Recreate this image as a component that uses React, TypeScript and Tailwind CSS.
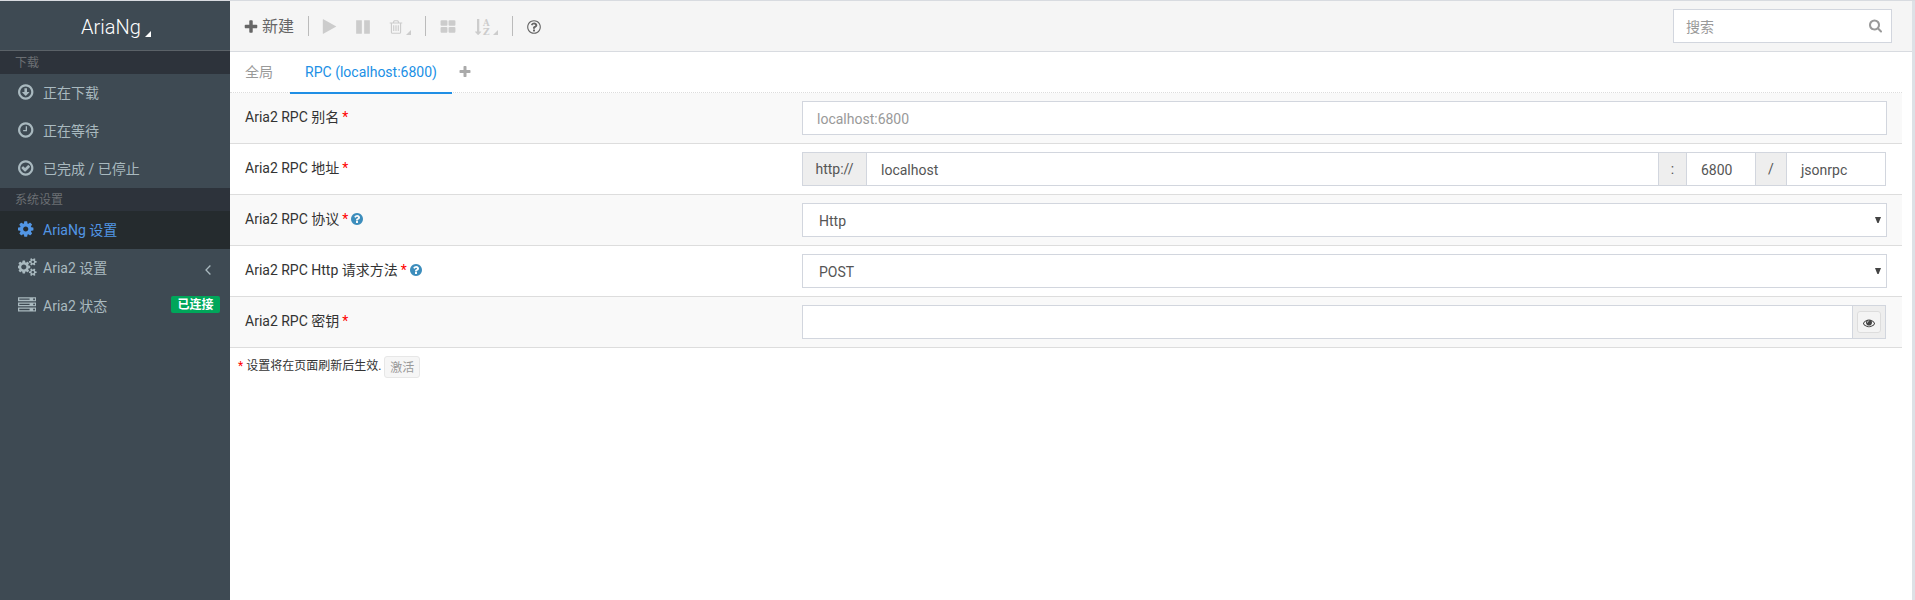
import React from "react";

const RING =
  "M1440 896q0-148-73-273t-198-198-273-73-273 73-198 198-73 273 73 273 198 198 273 73 273-73 198-198 73-273zm224 0q0 209-103 385.5t-279.5 279.5-385.5 103-385.5-103-279.5-279.5-103-385.5 103-385.5 279.5-279.5 385.5-103 385.5 103 279.5 279.5 103 385.5z";
const DISC = "M1664 896q0 209-103 385.5t-279.5 279.5-385.5 103-385.5-103-279.5-279.5-103-385.5 103-385.5 279.5-279.5 385.5-103 385.5 103 279.5 279.5 103 385.5z";
const SMALL_COG =
  "v140q0 16-149 31-12 27-30 52 51 113 51 138 0 4-4 7-122 71-124 71-8 0-46-47t-52-68q-20 2-30 2t-30-2q-14 21-52 68t-46 47q-2 0-124-71-4-3-4-7 0-25 51-138-18-25-30-52-149-15-149-31v-140q0-16 149-31 13-29 30-52-51-113-51-138 0-4 4-7 4-2 35-20t59-34 30-16q8 0 46 46.5t52 67.5q20-2 30-2t30 2q51-71 92-112l6-2q4 0 124 70 4 3 4 7 0 25-51 138 17 23 30 52 149 15 149 31z";
const SLOT = "v576q0 14-9 23t-23 9h-64q-14 0-23-9t-9-23v-576q0-14 9-23t23-9h64q14 0 23 9t9 23z";
const BAR = "v1408q0 26-19 45t-45 19h-512q-26 0-45-19t-19-45v-1408q0-26 19-45t45-19h512q26 0 45 19t19 45z";
const TILE = "v384q0 52-38 90t-90 38h-512q-52 0-90-38t-38-90v-384q0-52 38-90t90-38h512q52 0 90 38t38 90z";
const LED = "q0-40-28-68t-68-28-68 28-28 68 28 68 68 28 68-28 28-68z";

const PATHS = {
  down: RING + "M1248 928q0 14-10 24l-319 319q-10 9-23 9t-23-9l-320-320q-15-16-7-35 8-20 30-20h192v-352q0-14 9-23t23-9h192q14 0 23 9t9 23v352h192q14 0 23 9t9 23z",
  clock: RING + "M1024 544v448q0 14-9 23t-23 9h-320q-14 0-23-9t-9-23v-64q0-14 9-23t23-9h224v-352q0-14 9-23t23-9h64q14 0 23 9t9 23z",
  check: RING + "M1299 813l-422 422q-19 19-45 19t-45-19l-294-294q-19-19-19-45t19-45l102-102q19-19 45-19t45 19l147 147 275-275q19-19 45-19t45 19l102 102q19 19 19 45t-19 45z",
  cog: "M1152 896q0-106-75-181t-181-75-181 75-75 181 75 181 181 75 181-75 75-181zm512-109v222q0 12-8 23t-20 13l-185 28q-19 54-39 91 35 50 107 138 10 12 10 25t-9 23q-27 37-99 108t-94 71q-12 0-26-9l-138-108q-44 23-91 38-16 136-29 186-7 28-36 28h-222q-14 0-24.5-8.5t-11.5-21.5l-28-184q-49-16-90-37l-141 107q-10 9-25 9-14 0-25-11-126-114-165-168-7-10-7-23 0-12 8-23 15-21 51-66.5t54-70.5q-27-50-41-99l-183-27q-13-2-21-12.5t-8-23.5v-222q0-12 8-23t19-13l186-28q14-46 39-92-40-57-107-138-10-12-10-24 0-10 9-23 26-36 98.5-107.5t94.5-71.5q13 0 26 10l138 107q44-23 91-38 16-136 29-186 7-28 36-28h222q14 0 24.5 8.5t11.5 21.5l28 184q49 16 90 37l142-107q9-9 24-9 13 0 25 10 129 119 165 170 7 8 7 22 0 12-8 23-15 21-51 66.5t-54 70.5q26 50 41 98l183 28q13 2 21 12.5t8 23.5z",
  cogs:
    "M832 896q0-106-75-181t-181-75-181 75-75 181 75 181 181 75 181-75 75-181zm768 512q0-52-38-90t-90-38-90 38-38 90q0 53 37.5 90.5t90.5 37.5 90.5-37.5 37.5-90.5zm0-1024q0-52-38-90t-90-38-90 38-38 90q0 53 37.5 90.5t90.5 37.5 90.5-37.5 37.5-90.5zm-384 421v185q0 10-7 19.5t-16 10.5l-155 24q-11 35-32 76 34 48 90 115 7 11 7 20 0 12-7 19-23 30-82.5 89.5t-78.5 59.5q-11 0-21-7l-115-90q-37 19-77 31-11 108-23 155-7 24-30 24h-186q-11 0-20-7.5t-10-17.5l-23-153q-34-10-75-31l-118 89q-7 7-20 7-11 0-21-8-144-133-144-160 0-9 7-19 10-14 41-53t47-61q-23-44-35-82l-152-24q-10-1-17-9.5t-7-19.5v-185q0-10 7-19.5t16-10.5l155-24q11-35 32-76-34-48-90-115-7-11-7-20 0-12 7-20 22-30 82-89t79-59q11 0 21 7l115 90q34-18 77-32 11-108 23-154 7-24 30-24h186q11 0 20 7.5t10 17.5l23 153q34 10 75 31l118-89q8-7 20-7 11 0 21 8 144 133 144 160 0 8-7 19-12 16-42 54t-45 60q23 48 34 82l152 23q10 2 17 10.5t7 19.5zm640 533" +
    SMALL_COG + "M1856 314" + SMALL_COG,
  server:
    "M128 1408h1024v-128h-1024v128zm0-512h1024v-128h-1024v128zm0-512h1024v-128h-1024v128zM1696 1344" + LED + "M1696 832" + LED + "M1696 320" + LED +
    "M1792 1152v384h-1792v-384h1792zm0-512v384h-1792v-384h1792zm0-512v384h-1792v-384h1792z",
  plus: "M1600 736v192q0 40-28 68t-68 28h-416v416q0 40-28 68t-68 28h-192q-40 0-68-28t-28-68v-416h-416q-40 0-68-28t-28-68v-192q0-40 28-68t68-28h416v-416q0-40 28-68t68-28h192q40 0 68 28t28 68v416h416q40 0 68 28t28 68z",
  play: "M1576 927l-1328 738q-23 13-39.5 3t-16.5-36v-1472q0-26 16.5-36t39.5 3l1328 738q23 13 23 31t-23 31z",
  pause: "M1664 192" + BAR + "M768 192" + BAR,
  trash:
    "M704 736" + SLOT + "M960 736" + SLOT + "M1216 736" + SLOT +
    "M1344 1460v-948h-896v948q0 22 7 40.5t14.5 27 10.5 8.5h832q3 0 10.5-8.5t14.5-27 7-40.5zm-672-1076h448l-48-117q-7-9-17-11h-317q-10 2-17 11zm928 32v64q0 14-9 23t-23 9h-96v948q0 83-47 143.5t-113 60.5h-832q-66 0-113-58.5t-47-141.5v-952h-96q-14 0-23-9t-9-23v-64q0-14 9-23t23-9h309l70-167q15-37 54-63t79-26h320q40 0 79 26t54 63l70 167h309q14 0 23 9t9 23z",
  tiles: "M832 1024" + TILE + "M832 256" + TILE + "M1728 1024" + TILE + "M1728 256" + TILE,
  arrow: "M704 1440q0 12-10 24l-319 319q-10 9-23 9-12 0-23-9l-320-320q-15-16-7-35 8-20 30-20h192v-1376q0-14 9-23t23-9h192q14 0 23 9t9 23v1376h192q14 0 23 9t9 23z",
  help:
    "M1024 1376v-192q0-14-9-23t-23-9h-192q-14 0-23 9t-9 23v192q0 14 9 23t23 9h192q14 0 23-9t9-23zm256-672q0-88-55.5-163t-138.5-116-170-41q-243 0-371 213-15 24 8 42l132 100q7 6 19 6 16 0 25-12 53-68 86-92 34-24 86-24 48 0 85.5 26t37.5 59q0 38-20 61t-68 45q-63 28-115.5 86.5t-52.5 125.5v36q0 14 9 23t23 9h192q14 0 23-9t9-23q0-19 21.5-49.5t54.5-49.5q32-18 49-28.5t46-35 44.5-48 28-60.5 12.5-81z" + DISC,
  helpOutline:
    "M1008 1200v160q0 14-9 23t-23 9h-160q-14 0-23-9t-9-23v-160q0-14 9-23t23-9h160q14 0 23 9t9 23zm256-496q0 50-15 90t-45.5 69-52 44-59.5 36q-32 18-46.5 28t-26 24-11.5 29v32q0 14-9 23t-23 9h-160q-14 0-23-9t-9-23v-68q0-35 10.5-64.5t24-47.5 39-35.5 41-25.5 44.5-21q53-25 75-43t22-49q0-42-43.5-71.5t-95.5-29.5q-56 0-95 27-29 20-80 83-9 12-25 12-11 0-19-6l-108-82q-10-7-12-20t5-23q122-192 349-192 129 0 238.5 89.5t109.5 214.5zm-368-448q-130 0-248.5 51t-204 136.5-136.5 204-51 248.5 51 248.5 136.5 204 204 136.5 248.5 51 248.5-51 204-136.5 136.5-204 51-248.5-51-248.5-136.5-204-204-136.5-248.5-51z" + DISC,
  search:
    "M1216 832q0-185-131.5-316.5t-316.5-131.5-316.5 131.5-131.5 316.5 131.5 316.5 316.5 131.5 316.5-131.5 131.5-316.5zm512 832q0 52-38 90t-90 38q-54 0-90-38l-343-342q-179 124-399 124-143 0-273.5-55.5t-225-150-150-225-55.5-273.5 55.5-273.5 150-225 225-150 273.5-55.5 273.5 55.5 225 150 150 225 55.5 273.5q0 220-124 399l343 343q37 37 37 90z",
  eye: "M1664 960q-152-236-381-353 61 104 61 225 0 185-131.5 316.5t-316.5 131.5-316.5-131.5-131.5-316.5q0-121 61-225-229 117-381 353 133 205 333.5 326.5t434.5 121.5 434.5-121.5 333.5-326.5zm-720-384q0-20-14-34t-34-14q-125 0-214.5 89.5t-89.5 214.5q0 20 14 34t34 14 34-14 14-34q0-86 61-147t147-61q20 0 34-14t14-34zm848 384q0 34-20 69-140 230-376.5 368.5t-499.5 138.5-499.5-139-376.5-368q-20-35-20-69t20-69q140-229 376.5-368t499.5-139 499.5 139 376.5 368q20 35 20 69z",
};

function Icon({ name, className = "", box = "0 0 1792 1792" }: { name: keyof typeof PATHS; className?: string; box?: string }) {
  return (
    <svg viewBox={box} className={"block shrink-0 " + className} fill="currentColor" fillRule="evenodd">
      <path d={PATHS[name]} />
    </svg>
  );
}

function Corner({ className = "size-[5px]" }: { className?: string }) {
  return (
    <svg viewBox="0 0 5 5" className={"block shrink-0 " + className} fill="currentColor">
      <path d="M5 0V5H0z" />
    </svg>
  );
}

function MenuHeader({ children }: { children: React.ReactNode }) {
  return <div className="h-[23px] bg-[#2d333b] pt-px pl-[15px] text-xs leading-[23px] text-[#6b6f73]">{children}</div>;
}

function MenuItem({ icon, label, active, box, iconClass = "w-[18px]", children }: { icon: keyof typeof PATHS; label: string; active?: boolean; box?: string; iconClass?: string; children?: React.ReactNode }) {
  return (
    <div className={"flex h-[38px] items-center pr-[10px] text-sm " + (active ? "bg-[#252b2e] text-[#5296e5]" : "text-[#a9b9bf]")}>
      <span className="flex w-[43px] shrink-0 pb-[3px] pl-[18px]">
        <Icon name={icon} box={box} className={"h-[18px] " + iconClass} />
      </span>
      <span className="flex-1 leading-5">{label}</span>
      {children}
    </div>
  );
}

function Row({ label, striped, help, children }: { label: string; striped?: boolean; help?: boolean; children: React.ReactNode }) {
  return (
    <div className={"flex h-[51px] items-center border-b border-[#dddddd] pr-[15px] pl-[15px] " + (striped ? "bg-[#f9f9f9]" : "bg-white")}>
      <div className="flex w-[557px] shrink-0 items-center pb-[3px] leading-5 text-[#333]">
        <span>{label}</span>
        <span className="ml-[3px] text-[#f00]">*</span>
        {help && <Icon name="help" className="ml-[2px] size-[14px] text-[#3c8dbc]" />}
      </div>
      {children}
    </div>
  );
}

const field = "flex h-[34px] items-center border border-[#d2d6de] bg-white";
const addon = "flex items-center justify-center border-r border-[#d2d6de] bg-[#eee] pb-px";

function Select({ value }: { value: string }) {
  return (
    <div className={field + " w-[1085px] justify-between pr-[5px] pl-4"}>
      <span className="pt-[2px]">{value}</span>
      <svg viewBox="0 0 6 6" className="size-[6px]" fill="#444">
        <path d="M0 0h6L3.6 6h-1.2z" />
      </svg>
    </div>
  );
}

export default function App() {
  return (
    <div className="flex h-[600px] w-full border-t border-[#d8dbe0] bg-white font-['Roboto','Noto_Sans_CJK_SC',sans-serif] text-sm text-[#555]">
      <aside className="w-[230px] shrink-0 bg-[#3e4a53]">
        <div className="flex h-[50px] items-center justify-center border-b border-[#5b6268] pt-[2px] pl-[2px] text-white">
          <span className="text-xl leading-6 font-light">AriaNg</span>
          <Corner className="mt-[14px] ml-[4px] size-[6px]" />
        </div>
        <MenuHeader>下载</MenuHeader>
        <MenuItem icon="down" label="正在下载" box="128 0 1792 1792" />
        <MenuItem icon="clock" label="正在等待" box="128 0 1792 1792" />
        <MenuItem icon="check" label="已完成 / 已停止" box="128 0 1792 1792" />
        <MenuHeader>系统设置</MenuHeader>
        <MenuItem icon="cog" label="AriaNg 设置" active box="128 0 1792 1792" />
        <MenuItem icon="cogs" label="Aria2 设置" box="0 0 1920 1792" iconClass="w-[19.3px]">
          <svg viewBox="0 0 6 10" className="mt-1 mr-[9px] h-[10px] w-[6px]" fill="none" stroke="currentColor" strokeWidth="1.3">
            <path d="M5.4.5L1 5l4.4 4.5" />
          </svg>
        </MenuItem>
        <MenuItem icon="server" label="Aria2 状态">
          <span className="mb-[3px] h-[17px] w-[49px] rounded-[2px] bg-[#00a65a] pt-px text-center text-xs leading-[17px] font-bold text-white">已连接</span>
        </MenuItem>
      </aside>

      <main className="min-w-0 flex-1">
        <header className="flex h-[51px] items-center border-b border-[#d8dbe0] bg-[#f5f5f5] pr-5 pl-[13px] text-[#666]">
          <Icon name="plus" className="mt-px size-4" />
          <span className="ml-[3px] pt-px text-base leading-6">新建</span>
          <span className="ml-[14px] h-5 w-px bg-[#bbb]" />
          <div className="flex items-center text-[#ccc]">
            <Icon name="play" className="ml-[12px] size-[17px]" />
            <Icon name="pause" className="ml-[17px] mt-px size-4" />
            <Icon name="trash" className="ml-[17px] mt-px size-4" />
            <Corner className="mt-[13px] ml-[2px] size-[5px]" />
          </div>
          <span className="ml-[14px] h-5 w-px bg-[#bbb]" />
          <div className="flex items-center text-[#ccc]">
            <Icon name="tiles" className="mt-px ml-[14px] size-4" />
            <svg viewBox="-1 -2 18 20" className="mt-px ml-[18px] h-5 w-[18px]" fill="currentColor">
              <path d={PATHS.arrow} transform="scale(0.0089286)" />
              <text x="8" y="6.6" fontSize="9" fontWeight="700" fontFamily="DejaVu Serif, serif" textLength="6.6" lengthAdjust="spacingAndGlyphs">A</text>
              <text x="8" y="15.6" fontSize="9" fontWeight="700" fontFamily="DejaVu Serif, serif" textLength="6.6" lengthAdjust="spacingAndGlyphs">Z</text>
            </svg>
            <Corner className="mt-[13px] ml-px size-[5px]" />
          </div>
          <span className="ml-[14px] h-5 w-px bg-[#bbb]" />
          <Icon name="helpOutline" className="mt-px ml-[13px] size-4" />
          <div className="ml-auto flex h-[34px] w-[219px] items-center justify-between border border-[#d2d6de] bg-white pr-2 pl-3 text-[#999]">
            <span className="pt-[2px]">搜索</span>
            <Icon name="search" box="64 64 1792 1792" className="size-[14px]" />
          </div>
        </header>

        <div className="pr-[10px]">
          <nav className="flex h-[41px] items-start border-b border-dotted border-[#ddd]">
            <span className="pt-[10px] pl-[15px] leading-5 text-[#999]">全局</span>
            <span className="ml-[17px] h-[42px] w-[162px] border-b-2 border-[#208fe5] pt-[10px] text-center leading-5 text-[#208fe5]">RPC (localhost:6800)</span>
            <Icon name="plus" className="mt-[13px] ml-[6px] size-[14px] text-[#aaa]" />
          </nav>

          <Row label="Aria2 RPC 别名" striped>
            <div className={field + " w-[1085px] pl-[14px] text-[#999]"}>
              <span className="pt-[2px]">localhost:6800</span>
            </div>
          </Row>
          <Row label="Aria2 RPC 地址">
            <div className={field + " w-[1084px] items-stretch"}>
              <span className={addon + " w-[64px]"}>http://</span>
              <span className="flex flex-1 items-center border-r border-[#d2d6de] pt-[2px] pl-[14px]">localhost</span>
              <span className={addon + " w-[28px]"}>:</span>
              <span className="flex w-[69px] items-center border-r border-[#d2d6de] pt-[2px] pl-[14px]">6800</span>
              <span className={addon + " w-[31px]"}>/</span>
              <span className="flex w-[98px] items-center pt-[2px] pl-[14px]">jsonrpc</span>
            </div>
          </Row>
          <Row label="Aria2 RPC 协议" striped help>
            <Select value="Http" />
          </Row>
          <Row label="Aria2 RPC Http 请求方法" help>
            <Select value="POST" />
          </Row>
          <Row label="Aria2 RPC 密钥" striped>
            <div className={field + " w-[1084px] items-stretch justify-end"}>
              <span className="flex w-[33px] items-center justify-center border-l border-[#d2d6de] bg-[#eee]">
                <span className="flex h-[22px] w-6 items-center justify-center rounded-[3px] border border-[#ddd] bg-[#f4f4f4] text-[#444]">
                  <Icon name="eye" className="mt-px size-3" />
                </span>
              </span>
            </div>
          </Row>

          <div className="flex items-center pt-2 pl-2 text-xs text-[#333]">
            <span className="pb-[3px] text-[#f00]">*</span>
            <span className="ml-[3px] pb-[3px]">设置将在页面刷新后生效.</span>
            <span className="ml-[3px] flex h-[22px] w-9 items-center justify-center rounded-[3px] border border-[#e7e7e7] bg-[#f6f6f6] pt-px text-[#999]">激活</span>
          </div>
        </div>
      </main>
      <div className="w-[3px] shrink-0 bg-[#dde1e6]" />
    </div>
  );
}
